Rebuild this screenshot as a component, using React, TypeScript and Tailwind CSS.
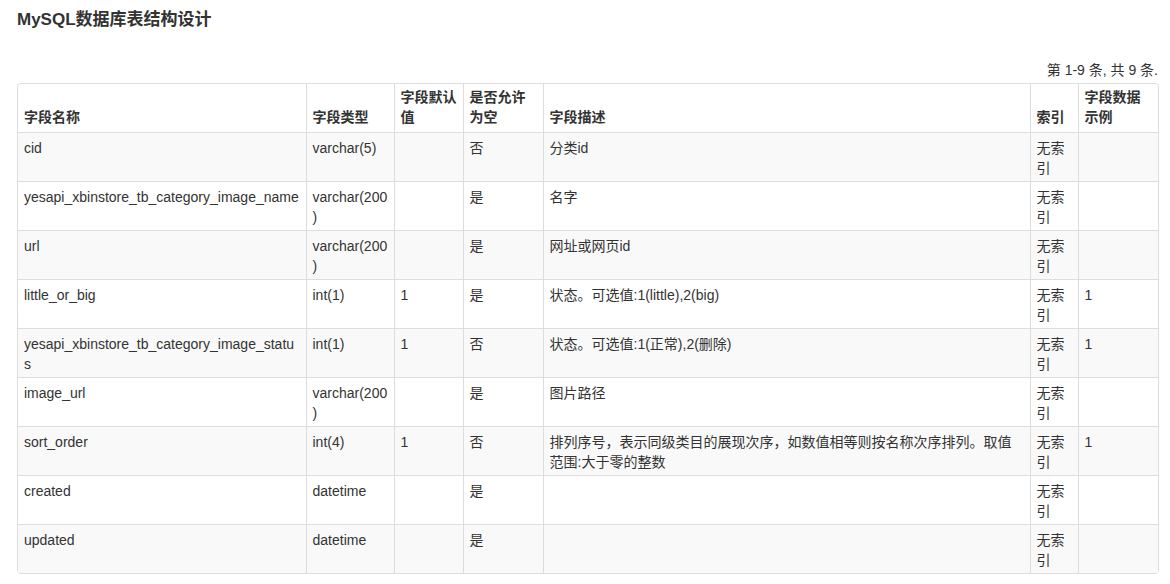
const rows = [
  ["cid", "varchar(5)", "", "否", "分类id", "无索引", ""],
  ["yesapi_xbinstore_tb_category_image_name", "varchar(200)", "", "是", "名字", "无索引", ""],
  ["url", "varchar(200)", "", "是", "网址或网页id", "无索引", ""],
  ["little_or_big", "int(1)", "1", "是", "状态。可选值:1(little),2(big)", "无索引", "1"],
  ["yesapi_xbinstore_tb_category_image_status", "int(1)", "1", "否", "状态。可选值:1(正常),2(删除)", "无索引", "1"],
  ["image_url", "varchar(200)", "", "是", "图片路径", "无索引", ""],
  ["sort_order", "int(4)", "1", "否", "排列序号，表示同级类目的展现次序，如数值相等则按名称次序排列。取值范围:大于零的整数", "无索引", "1"],
  ["created", "datetime", "", "是", "", "无索引", ""],
  ["updated", "datetime", "", "是", "", "无索引", ""],
];

const headers = ["字段名称", "字段类型", "字段默认值", "是否允许为空", "字段描述", "索引", "字段数据示例"];
const widths = ["w-[288px]", "w-[88px]", "w-[69px]", "w-[80px]", "w-[487px]", "w-[48px]", "w-[81px]"];

export default function App() {
  return (
    <div
      className="min-h-screen bg-white px-[17px] pt-[9px] text-[14px] text-[#333]"
      style={{ fontFamily: '"Liberation Sans", "Noto Sans CJK SC", sans-serif' }}
    >
      <h1 className="text-[17px] font-bold leading-[22px] text-[#333]">MySQL数据库表结构设计</h1>
      <div className="mt-[29px] mr-[-5px] text-right leading-[20px]">第 1-9 条, 共 9 条.</div>
      <div className="mt-[3px] w-[1142px] overflow-hidden rounded-[4px] border border-[#ddd]">
        <table className="w-[1141px] table-fixed border-collapse">
          <colgroup>
            {widths.map((w, i) => (
              <col key={i} className={w} />
            ))}
          </colgroup>
          <thead>
            <tr className="h-[48px]">
              {headers.map((h, i) => (
                <th
                  key={i}
                  className="border-l border-[#ddd] px-[6px] pb-[5px] text-left align-bottom font-bold leading-[20px] first:border-l-0"
                >
                  {h}
                </th>
              ))}
            </tr>
          </thead>
          <tbody>
            {rows.map((r, ri) => (
              <tr key={ri} className={`h-[49px] ${ri % 2 === 0 ? "bg-[#f9f9f9]" : "bg-white"}`}>
                {r.map((c, ci) => (
                  <td
                    key={ci}
                    className="border-t border-l border-[#ddd] px-[6px] pt-[5px] pb-[3px] align-top leading-[20px] break-words first:border-l-0"
                  >
                    {c}
                  </td>
                ))}
              </tr>
            ))}
          </tbody>
        </table>
      </div>
    </div>
  );
}
